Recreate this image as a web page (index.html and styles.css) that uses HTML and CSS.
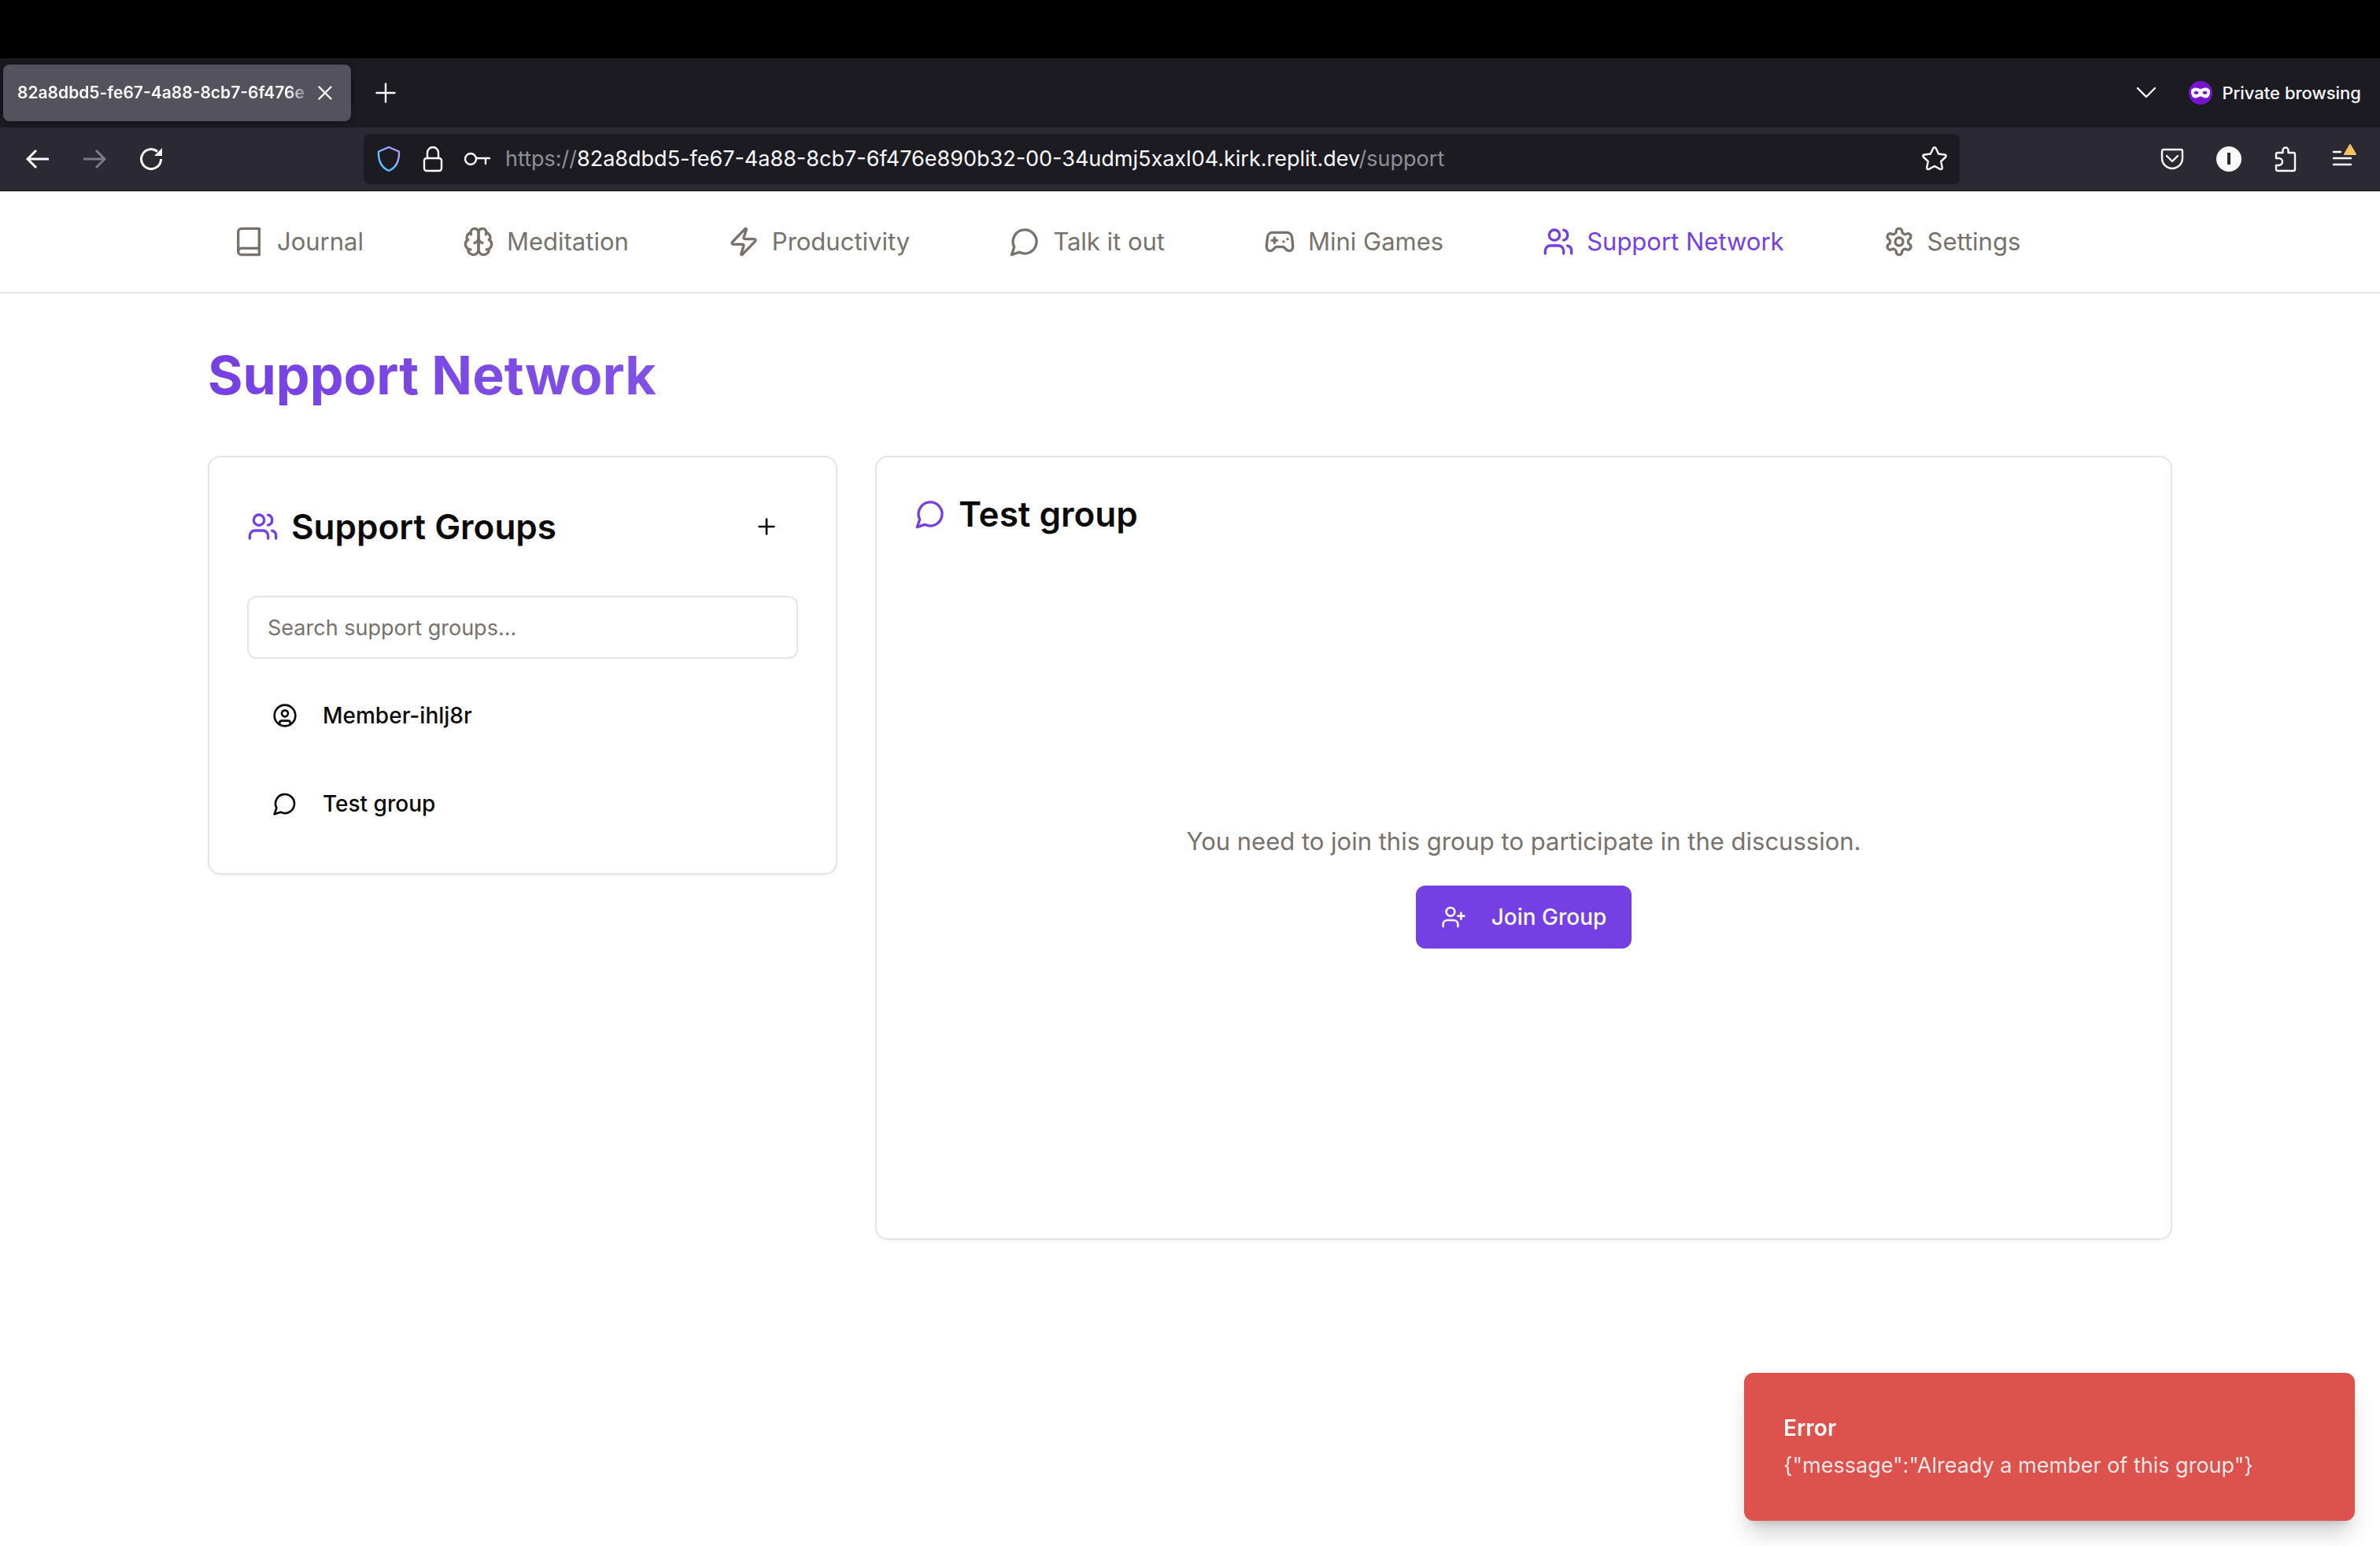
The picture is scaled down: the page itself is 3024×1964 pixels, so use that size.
FILE: index.html
```html
<!DOCTYPE html>
<html lang="en">
<head>
<meta charset="utf-8">
<title>Support Network</title>
<link rel="stylesheet" href="styles.css">
</head>
<body>
<svg class="sprite" aria-hidden="true">
  <symbol id="message" viewBox="0 0 24 24"><path d="M7.9 20A9 9 0 1 0 4 16.1L2 22Z"/></symbol>
  <symbol id="users" viewBox="0 0 24 24"><path d="M16 21v-2a4 4 0 0 0-4-4H6a4 4 0 0 0-4 4v2"/><circle cx="9" cy="7" r="4"/><path d="M22 21v-2a4 4 0 0 0-3-3.87M16 3.13a4 4 0 0 1 0 7.75"/></symbol>
</svg>

<div class="browser">
  <div class="screen-edge"></div>
  <div class="tabbar">
    <div class="tab">
      <span class="tab-title">82a8dbd5-fe67-4a88-8cb7-6f476e</span>
      <button class="tab-close" aria-label="Close tab"><svg width="18" height="18" viewBox="0 0 18 18"><path d="M1.500 1.500l15 15M16.500 1.500l-15 15"/></svg></button>
    </div>
    <button class="tool new-tab" aria-label="New tab"><svg width="26" height="26" viewBox="0 0 26 26"><path d="M13 1.500v23M1.500 13h23"/></svg></button>
    <button class="tool tab-list" aria-label="List all tabs"><svg width="26" height="16" viewBox="0 0 26 16"><path d="M2 2l11 11 11-11"/></svg></button>
    <div class="private">
      <svg width="30" height="30" viewBox="0 0 30 30"><circle class="mask-disc" cx="15" cy="15" r="15"/><path class="mask-face" d="M3 13c0-3 3-4.500 6-4.500 2.500 0 4 1.500 6 1.500s3.500-1.500 6-1.500c3 0 6 1.500 6 4.500 0 5-2 8.500-5.500 8.500-3 0-4-2-6.500-2s-3.500 2-6.500 2C5 21.500 3 18 3 13z"/><ellipse class="mask-disc" cx="9.500" cy="14.800" rx="2.800" ry="2"/><ellipse class="mask-disc" cx="20.500" cy="14.800" rx="2.800" ry="2"/></svg>
      <span>Private browsing</span>
    </div>
  </div>
  <div class="toolbar">
    <button class="tool" aria-label="Back"><svg width="30" height="26" viewBox="0 0 30 26"><path class="thick" d="M2 13h27M13 2L2 13l11 11"/></svg></button>
    <button class="tool tool-off" aria-label="Forward" disabled><svg width="30" height="26" viewBox="0 0 30 26"><path class="thick" d="M1 13h27M17 2l11 11-11 11"/></svg></button>
    <button class="tool" aria-label="Reload"><svg width="30" height="30" viewBox="0 0 30 30"><path class="thick" d="M27.500 15A12.500 12.500 0 1 1 23 5.500"/><path class="solid" d="M29 1v10H19z"/></svg></button>
    <div class="urlbar">
      <button class="tool" aria-label="Tracking protection"><svg width="32" height="34" viewBox="0 0 32 34"><defs><linearGradient id="shield" x1="0" y1="1" x2="1" y2="0"><stop offset=".2" stop-color="#54c8ff"/><stop offset=".9" stop-color="#b79bff"/></linearGradient></defs><path class="shield" d="M16 2l13 5.500C29.500 20 25 28 16 32 7 28 2.500 20 3 7.500z"/></svg></button>
      <button class="tool" aria-label="Site information"><svg width="26" height="34" viewBox="0 0 26 34"><rect x="2" y="16" width="22" height="16" rx="3"/><path d="M6 16V9a7 7 0 0 1 14 0v7"/></svg></button>
      <button class="tool" aria-label="Saved logins"><svg width="34" height="20" viewBox="0 0 34 20"><circle cx="9" cy="10" r="7"/><path d="M16 9h17M28 9v7"/></svg></button>
      <div class="url">https://<span class="host">82a8dbd5-fe67-4a88-8cb7-6f476e890b32-00-34udmj5xaxl04.kirk.replit.dev</span>/support</div>
      <button class="tool" aria-label="Bookmark"><svg width="34" height="34" viewBox="0 0 34 34"><path d="M15.300 3.200a1.900 1.900 0 0 1 3.400 0l3.400 7.300 8 1c1.600.200 2.100 1.900 1 3l-5.900 5.500 1.600 8c.300 1.600-1.300 2.600-2.700 1.900L17 26l-7.100 3.900c-1.400.700-3-.300-2.700-1.900l1.600-8-5.900-5.500c-1.100-1.100-.600-2.800 1-3l8-1z"/></svg></button>
    </div>
    <button class="tool" aria-label="Save to Pocket"><svg width="30" height="28" viewBox="0 0 30 28"><path d="M4 2h22a2 2 0 0 1 2 2v9a13 13 0 0 1-26 0V4a2 2 0 0 1 2-2z"/><path d="M8 10l7 7 7-7"/></svg></button>
    <button class="tool" aria-label="Account"><svg width="32" height="32" viewBox="0 0 32 32"><circle class="solid" cx="16" cy="16" r="16"/><path class="bar" d="M16 8v15"/></svg></button>
    <button class="tool" aria-label="Extensions"><svg width="28" height="34" viewBox="0 0 28 34"><path d="M2 13v-2a2 2 0 0 1 2-2h6.500V6a3.500 3.500 0 0 1 7 0v3H24a2 2 0 0 1 2 2v19a2 2 0 0 1-2 2H4a2 2 0 0 1-2-2v-5h3.500a4 4 0 0 0 0-9H2z"/></svg></button>
    <button class="tool" aria-label="Menu"><svg width="40" height="40" viewBox="0 0 40 40"><path d="M9 11h9M9 19h22M9 27h22"/><path class="warn" d="M30 2l7 12H23z"/></svg></button>
  </div>
</div>

<nav class="nav">
  <ul class="nav-list">
    <li><a href="#journal" class="nav-link"><svg class="icon" viewBox="0 0 24 24"><path d="M4 19.500v-15A2.500 2.500 0 0 1 6.500 2H20v20H6.500a2.500 2.500 0 0 1 0-5H20"/></svg>Journal</a></li>
    <li><a href="#meditation" class="nav-link"><svg class="icon" viewBox="0 0 24 24"><path d="M12 5a3 3 0 1 0-5.997.125 4 4 0 0 0-2.526 5.770 4 4 0 0 0 .556 6.588A4 4 0 1 0 12 18Z"/><path d="M12 5a3 3 0 1 1 5.997.125 4 4 0 0 1 2.526 5.770 4 4 0 0 1-.556 6.588A4 4 0 1 1 12 18Z"/><path d="M15 13a4.500 4.500 0 0 1-3-4 4.500 4.500 0 0 1-3 4M17.599 6.500a3 3 0 0 0 .399-1.375M6.003 5.125A3 3 0 0 0 6.401 6.500M3.477 10.896a4 4 0 0 1 .585-.396M19.938 10.500a4 4 0 0 1 .585.396M6 18a4 4 0 0 1-1.967-.516M19.967 17.484A4 4 0 0 1 18 18"/></svg>Meditation</a></li>
    <li><a href="#productivity" class="nav-link"><svg class="icon" viewBox="0 0 24 24"><path d="M4 14a1 1 0 0 1-.78-1.630l9.900-10.200a.5.5 0 0 1 .86.460l-1.920 6.020A1 1 0 0 0 13 10h7a1 1 0 0 1 .78 1.630l-9.900 10.200a.5.5 0 0 1-.86-.460l1.920-6.020A1 1 0 0 0 11 14z"/></svg>Productivity</a></li>
    <li><a href="#talk" class="nav-link"><svg class="icon"><use href="#message"/></svg>Talk it out</a></li>
    <li><a href="#games" class="nav-link"><svg class="icon" viewBox="0 0 24 24"><path d="M6 11h4M8 9v4M15 12h.01M18 10h.01"/><path d="M17.320 5H6.680a4 4 0 0 0-3.978 3.590c-.006.052-.010.101-.017.152C2.604 9.416 2 14.456 2 16a3 3 0 0 0 3 3c1 0 1.500-.5 2-1l1.414-1.414A2 2 0 0 1 9.828 16h4.344a2 2 0 0 1 1.414.586L17 18c.5.5 1 1 2 1a3 3 0 0 0 3-3c0-1.545-.604-6.584-.685-7.258-.007-.050-.011-.1-.017-.151A4 4 0 0 0 17.320 5z"/></svg>Mini Games</a></li>
    <li><a href="#support" class="nav-link active" aria-current="page"><svg class="icon"><use href="#users"/></svg>Support Network</a></li>
    <li><a href="#settings" class="nav-link"><svg class="icon" viewBox="0 0 24 24"><path d="M12.220 2h-.440a2 2 0 0 0-2 2v.180a2 2 0 0 1-1 1.730l-.430.250a2 2 0 0 1-2 0l-.150-.080a2 2 0 0 0-2.730.730l-.220.380a2 2 0 0 0 .730 2.730l.150.100a2 2 0 0 1 1 1.720v.510a2 2 0 0 1-1 1.740l-.150.090a2 2 0 0 0-.730 2.730l.220.380a2 2 0 0 0 2.730.730l.150-.080a2 2 0 0 1 2 0l.430.250a2 2 0 0 1 1 1.730V20a2 2 0 0 0 2 2h.440a2 2 0 0 0 2-2v-.180a2 2 0 0 1 1-1.730l.430-.250a2 2 0 0 1 2 0l.150.080a2 2 0 0 0 2.730-.730l.220-.390a2 2 0 0 0-.730-2.730l-.150-.080a2 2 0 0 1-1-1.740v-.500a2 2 0 0 1 1-1.740l.150-.090a2 2 0 0 0 .730-2.730l-.220-.380a2 2 0 0 0-2.730-.730l-.150.080a2 2 0 0 1-2 0l-.430-.250a2 2 0 0 1-1-1.730V4a2 2 0 0 0-2-2z"/><circle cx="12" cy="12" r="3"/></svg>Settings</a></li>
  </ul>
</nav>

<main class="page">
  <h1 class="page-title">Support Network</h1>
  <div class="columns">
    <section class="card">
      <div class="card-header">
        <h2 class="card-title"><svg class="icon accent"><use href="#users"/></svg>Support Groups</h2>
        <button class="add" aria-label="Create group"><svg class="icon-sm" viewBox="0 0 24 24"><path d="M5 12h14M12 5v14"/></svg></button>
      </div>
      <div class="group-panel">
        <input class="search" type="text" aria-label="Search support groups" placeholder="Search support groups...">
        <button class="group"><svg class="icon-sm" viewBox="0 0 24 24"><circle cx="12" cy="12" r="10"/><circle cx="12" cy="10" r="3"/><path d="M7 20.662V19a2 2 0 0 1 2-2h6a2 2 0 0 1 2 2v1.662"/></svg>Member-ihlj8r</button>
        <button class="group"><svg class="icon-sm"><use href="#message"/></svg>Test group</button>
      </div>
    </section>
    <section class="card">
      <div class="card-header">
        <h2 class="card-title"><svg class="icon accent"><use href="#message"/></svg>Test group</h2>
      </div>
      <div class="join-panel">
        <p class="join-text">You need to join this group to participate in the discussion.</p>
        <button class="join"><svg class="icon-sm" viewBox="0 0 24 24"><path d="M16 21v-2a4 4 0 0 0-4-4H6a4 4 0 0 0-4 4v2M19 8v6M22 11h-6"/><circle cx="9" cy="7" r="4"/></svg>Join Group</button>
      </div>
    </section>
  </div>
</main>

<div class="toast" role="alert">
  <div class="toast-title">Error</div>
  <div class="toast-text">{"message":"Already a member of this group"}</div>
</div>
</body>
</html>
```
FILE: styles.css
```css
:root {
  --primary: #7540e3;
  --ink: #0c0a09;
  --muted: #78716c;
  --line: #e5e5e5;
}

* {
  box-sizing: border-box;
}

body {
  margin: 0;
  min-height: 100vh;
  background: #fff;
  color: var(--ink);
  font-family: Inter, "Liberation Sans", sans-serif;
  font-size: 31px;
  line-height: 48px;
}

button,
input {
  margin: 0;
  padding: 0;
  border: 0;
  background: none;
  color: inherit;
  font: inherit;
}

svg {
  flex: none;
  display: block;
  fill: none;
  stroke: currentColor;
  stroke-width: 2;
  stroke-linecap: round;
  stroke-linejoin: round;
}

.sprite {
  position: absolute;
  width: 0;
  height: 0;
}

.icon {
  width: 40px;
  height: 40px;
}

.icon-sm {
  width: 32px;
  height: 32px;
}

.accent {
  color: var(--primary);
}

/* Browser window */

.browser {
  color: #fbfbfe;
  border-bottom: 1px solid #0c0c0d;
}

.browser svg {
  stroke-width: 2.4;
}

.screen-edge {
  height: 74px;
  background: #000;
}

.tabbar {
  display: flex;
  align-items: center;
  height: 88px;
  padding: 0 24px 0 4px;
  background: #1c1b22;
  font-size: 22px;
  line-height: 34px;
}

.tab {
  display: flex;
  align-items: center;
  width: 442px;
  height: 72px;
  padding: 0 18px;
  border-radius: 8px;
  background: #54525d;
  box-shadow: 0 0 8px rgba(0, 0, 0, .5);
  font-size: 21px;
  font-weight: 600;
}

.tab-title {
  flex: 1;
  white-space: nowrap;
  -webkit-mask-image: linear-gradient(to left, transparent, #000 32px);
  mask-image: linear-gradient(to left, transparent, #000 32px);
}

.tab-close {
  display: flex;
  justify-content: center;
  width: 30px;
}

.tool {
  display: flex;
  flex: none;
  align-items: center;
  justify-content: center;
  width: 40px;
  height: 40px;
}

.tool-off {
  color: #7d7b83;
}

.new-tab {
  margin-left: 24px;
}

.tab-list {
  margin-left: auto;
}

.private {
  display: flex;
  align-items: center;
  gap: 12px;
  margin-left: 34px;
  font-weight: 500;
}

.toolbar {
  display: flex;
  align-items: center;
  gap: 32px;
  height: 80px;
  padding: 0 28px;
  background: #2b2a33;
}

.urlbar {
  display: flex;
  flex: 1;
  align-items: center;
  gap: 16px;
  height: 64px;
  margin: 0 218px;
  padding: 0 12px;
  border-radius: 8px;
  background: #1c1b22;
}

.url {
  flex: 1;
  color: #8f8f96;
  font-size: 27px;
  white-space: nowrap;
}

.host {
  color: #fbfbfe;
}

.browser .thick {
  stroke-width: 3;
  stroke-linecap: butt;
  stroke-linejoin: miter;
}

.solid {
  fill: currentColor;
  stroke: none;
}

.shield {
  stroke: url(#shield);
}

.bar {
  stroke: #2b2a33;
  stroke-width: 4;
  stroke-linecap: butt;
}

.warn {
  fill: #f5c062;
  stroke: #f5c062;
  stroke-width: 2;
}

.mask-disc {
  fill: #7614d2;
  stroke: none;
}

.mask-face {
  fill: #fff;
  stroke: none;
}

/* Site navigation */

.nav {
  padding: 0 264px;
  border-bottom: 2px solid var(--line);
}

.nav-list {
  display: flex;
  align-items: center;
  gap: 62px;
  height: 128px;
  margin: 0;
  padding: 0;
  list-style: none;
}

.nav-link {
  display: flex;
  align-items: center;
  gap: 16px;
  padding: 0 32px;
  color: var(--muted);
  text-decoration: none;
  white-space: nowrap;
}

.nav-link.active {
  color: var(--primary);
}

/* Page content */

.page {
  max-width: 2560px;
  margin: 0 auto;
  padding: 64px 32px;
}

.page-title {
  margin: 0 0 64px;
  background: linear-gradient(to right, var(--primary), rgba(117, 64, 227, .6));
  -webkit-background-clip: text;
  background-clip: text;
  color: transparent;
  font-size: 68px;
  font-weight: 700;
  line-height: 78px;
}

.columns {
  display: grid;
  grid-template-columns: repeat(3, 1fr);
  align-items: start;
  gap: 48px;
}

.card {
  padding: 48px;
  border: 2px solid var(--line);
  border-radius: 16px;
  box-shadow: 0 2px 4px rgba(0, 0, 0, .05);
}

.card + .card {
  grid-column: span 2;
}

.card-header {
  display: flex;
  align-items: center;
  justify-content: space-between;
  margin-bottom: 48px;
}

.card-title {
  display: flex;
  align-items: center;
  gap: 16px;
  margin: 0;
  font-size: 44px;
  font-weight: 600;
  line-height: 48px;
}

.add {
  display: flex;
  align-items: center;
  justify-content: center;
  width: 80px;
  height: 80px;
}

.group-panel {
  display: flex;
  flex-direction: column;
  gap: 32px;
  font-size: 28px;
  line-height: 40px;
}

.search {
  width: 100%;
  height: 80px;
  padding: 0 24px;
  border: 2px solid var(--line);
  border-radius: 12px;
  font-size: 27px;
}

.search::placeholder {
  color: var(--muted);
  opacity: 1;
}

.group {
  display: flex;
  align-items: center;
  gap: 32px;
  height: 80px;
  padding: 0 32px;
  font-weight: 500;
}

.join-panel {
  display: flex;
  flex-direction: column;
  align-items: center;
  justify-content: center;
  gap: 32px;
  height: 800px;
}

.join-text {
  margin: 0;
  color: var(--muted);
}

.join {
  display: flex;
  align-items: center;
  gap: 32px;
  height: 80px;
  padding: 0 32px;
  border-radius: 12px;
  background: var(--primary);
  color: #fafaf9;
  font-size: 28px;
  font-weight: 500;
}

/* Notification */

.toast {
  position: fixed;
  right: 32px;
  bottom: 32px;
  width: 776px;
  padding: 48px;
  border: 2px solid #dd524c;
  border-radius: 12px;
  background: #dd524c;
  box-shadow: 0 20px 30px -6px rgba(0, 0, 0, .2), 0 8px 12px -8px rgba(0, 0, 0, .2);
  color: #fafaf9;
  font-size: 28px;
  line-height: 40px;
}

.toast-title {
  margin-bottom: 8px;
  font-weight: 600;
}

.toast-text {
  font-size: 27px;
  opacity: .9;
}
```
